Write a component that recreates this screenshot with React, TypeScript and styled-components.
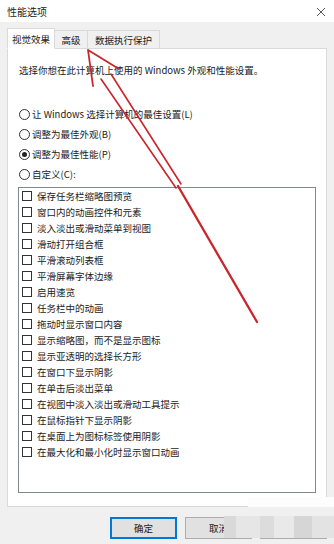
import React, { FC } from 'react';
import styled, { createGlobalStyle } from 'styled-components';

const GlobalStyle = createGlobalStyle`
  html, body {
    margin: 0;
    padding: 0;
    background: #f0f0f0;
  }
  * {
    box-sizing: border-box;
  }
`;

const options = [
  '保存任务栏缩略图预览',
  '窗口内的动画控件和元素',
  '淡入淡出或滑动菜单到视图',
  '滑动打开组合框',
  '平滑滚动列表框',
  '平滑屏幕字体边缘',
  '启用速览',
  '任务栏中的动画',
  '拖动时显示窗口内容',
  '显示缩略图，而不是显示图标',
  '显示亚透明的选择长方形',
  '在窗口下显示阴影',
  '在单击后淡出菜单',
  '在视图中淡入淡出或滑动工具提示',
  '在鼠标指针下显示阴影',
  '在桌面上为图标标签使用阴影',
  '在最大化和最小化时显示窗口动画',
];

const radios = [
  { label: '让 Windows 选择计算机的最佳设置(L)', checked: false },
  { label: '调整为最佳外观(B)', checked: false },
  { label: '调整为最佳性能(P)', checked: true },
  { label: '自定义(C):', checked: false },
];

const tabs = [
  { label: '视觉效果', width: 48, active: true },
  { label: '高级', width: 34, active: false },
  { label: '数据执行保护', width: 73, active: false },
];

const App: FC = () => (
  <Window>
    <GlobalStyle />
    <TitleBar>
      <Title>性能选项</Title>
      <CloseIcon width="10" height="10" viewBox="0 0 10 10">
        <path d="M1 1 L9 9 M9 1 L1 9" stroke="#555" strokeWidth="1" />
      </CloseIcon>
    </TitleBar>

    <Body>
      <TabStrip>
        {tabs.map((t) => (
          <Tab key={t.label} active={t.active} $width={t.width}>
            {t.label}
          </Tab>
        ))}
      </TabStrip>

      <Panel>
        <Description>选择你想在此计算机上使用的 Windows 外观和性能设置。</Description>

        <RadioGroup>
          {radios.map((r) => (
            <RadioRow key={r.label}>
              <RadioCircle checked={r.checked} />
              <span>{r.label}</span>
            </RadioRow>
          ))}
        </RadioGroup>

        <ListBox>
          {options.map((o) => (
            <CheckRow key={o}>
              <CheckBox />
              <span>{o}</span>
            </CheckRow>
          ))}
        </ListBox>
      </Panel>

      <ButtonRow>
        <DialogButton primary>确定</DialogButton>
        <DialogButton>取消</DialogButton>
        <DialogButton>应用(A)</DialogButton>
      </ButtonRow>
    </Body>

    <WatermarkStrip />
    <Watermark />

    <ArrowOverlay width="334" height="544" viewBox="0 0 334 544">
      <g stroke="#c9262b" fill="none" strokeLinecap="round" strokeLinejoin="round">
        <path d="M93 86 L88 50 L119 69" strokeWidth="1.8" />
        <path d="M101 79 L176 188" strokeWidth="1.6" />
        <path d="M111 74 L181 184" strokeWidth="1.6" />
        <path d="M178 186 L257 322" strokeWidth="2.3" />
      </g>
    </ArrowOverlay>
  </Window>
);

export default App;

const Window = styled.div`
  position: relative;
  width: 334px;
  height: 544px;
  background: #f0f0f0;
  font-family: 'Noto Sans CJK SC', 'Noto Sans', sans-serif;
  font-size: 9.5px;
  color: #1b1b1b;
  overflow: hidden;
`;

const TitleBar = styled.div`
  height: 22px;
  background: #fff;
  display: flex;
  align-items: center;
  justify-content: space-between;
  padding: 0 8px 0 7px;
`;

const Title = styled.span`
  font-size: 10px;
  color: #222;
`;

const CloseIcon = styled.svg`
  display: block;
  margin-top: 1px;
`;

const Body = styled.div`
  padding: 5px 7px 0 7px;
`;

const TabStrip = styled.div`
  display: flex;
  align-items: flex-end;
  height: 21px;
  position: relative;
  z-index: 1;
`;

const Tab = styled.div<{ active?: boolean; $width: number }>`
  width: ${({ $width }) => $width}px;
  height: ${({ active }) => (active ? '21px' : '18px')};
  display: flex;
  align-items: center;
  justify-content: center;
  white-space: nowrap;
  background: ${({ active }) => (active ? '#fff' : '#f0f0f0')};
  border: 1px solid #d9d9d9;
  border-bottom: ${({ active }) => (active ? '1px solid #fff' : 'none')};
  margin-left: ${({ active }) => (active ? '0' : '-1px')};
  margin-bottom: ${({ active }) => (active ? '-1px' : '0')};
  font-size: 9.5px;
`;

const Panel = styled.div`
  height: 459px;
  background: #fff;
  border: 1px solid #d9d9d9;
  padding: 0 10px;
`;

const Description = styled.div`
  margin-top: 14px;
  line-height: 14px;
  padding-left: 1px;
`;

const RadioGroup = styled.div`
  margin-top: 27px;
  display: flex;
  flex-direction: column;
`;

const RadioRow = styled.div`
  height: 20px;
  display: flex;
  align-items: center;
  gap: 2px;
  padding-left: 1px;
`;

const RadioCircle = styled.span<{ checked: boolean }>`
  width: 11px;
  height: 11px;
  border: 1px solid #333;
  border-radius: 50%;
  display: flex;
  align-items: center;
  justify-content: center;
  flex-shrink: 0;
  &::after {
    content: '';
    width: 5px;
    height: 5px;
    border-radius: 50%;
    background: ${({ checked }) => (checked ? '#222' : 'transparent')};
  }
`;

const ListBox = styled.div`
  margin-top: 3px;
  height: 306px;
  border: 1px solid #828790;
  display: flex;
  flex-direction: column;
`;

const CheckRow = styled.div`
  height: 16px;
  display: flex;
  align-items: center;
  gap: 5px;
  padding-left: 3px;
`;

const CheckBox = styled.span`
  width: 10px;
  height: 10px;
  border: 1px solid #333;
  background: #fff;
  flex-shrink: 0;
`;

const ButtonRow = styled.div`
  margin-top: 10px;
  display: flex;
  justify-content: flex-end;
  gap: 8px;
`;

const DialogButton = styled.div<{ primary?: boolean }>`
  width: 67px;
  height: 22px;
  display: flex;
  align-items: center;
  justify-content: center;
  background: #e1e1e1;
  border: ${({ primary }) => (primary ? '2px solid #0078d7' : '1px solid #adadad')};
  font-size: 9.5px;
`;

const WatermarkStrip = styled.div`
  position: absolute;
  left: 248px;
  top: 497px;
  width: 86px;
  height: 10px;
  background: #fdfdfd;
`;

const Watermark = styled.div`
  position: absolute;
  left: 224px;
  top: 516px;
  width: 110px;
  height: 22px;
  background: linear-gradient(
    90deg,
    #d9d9d9 0 12px,
    #e6e6e6 12px 36px,
    #dcdcdc 36px 50px,
    #e9e9e9 50px 70px,
    #d6d6d6 70px 88px,
    #e3e3e3 88px 110px
  );
`;

const ArrowOverlay = styled.svg`
  position: absolute;
  left: 0;
  top: 0;
  pointer-events: none;
`;
